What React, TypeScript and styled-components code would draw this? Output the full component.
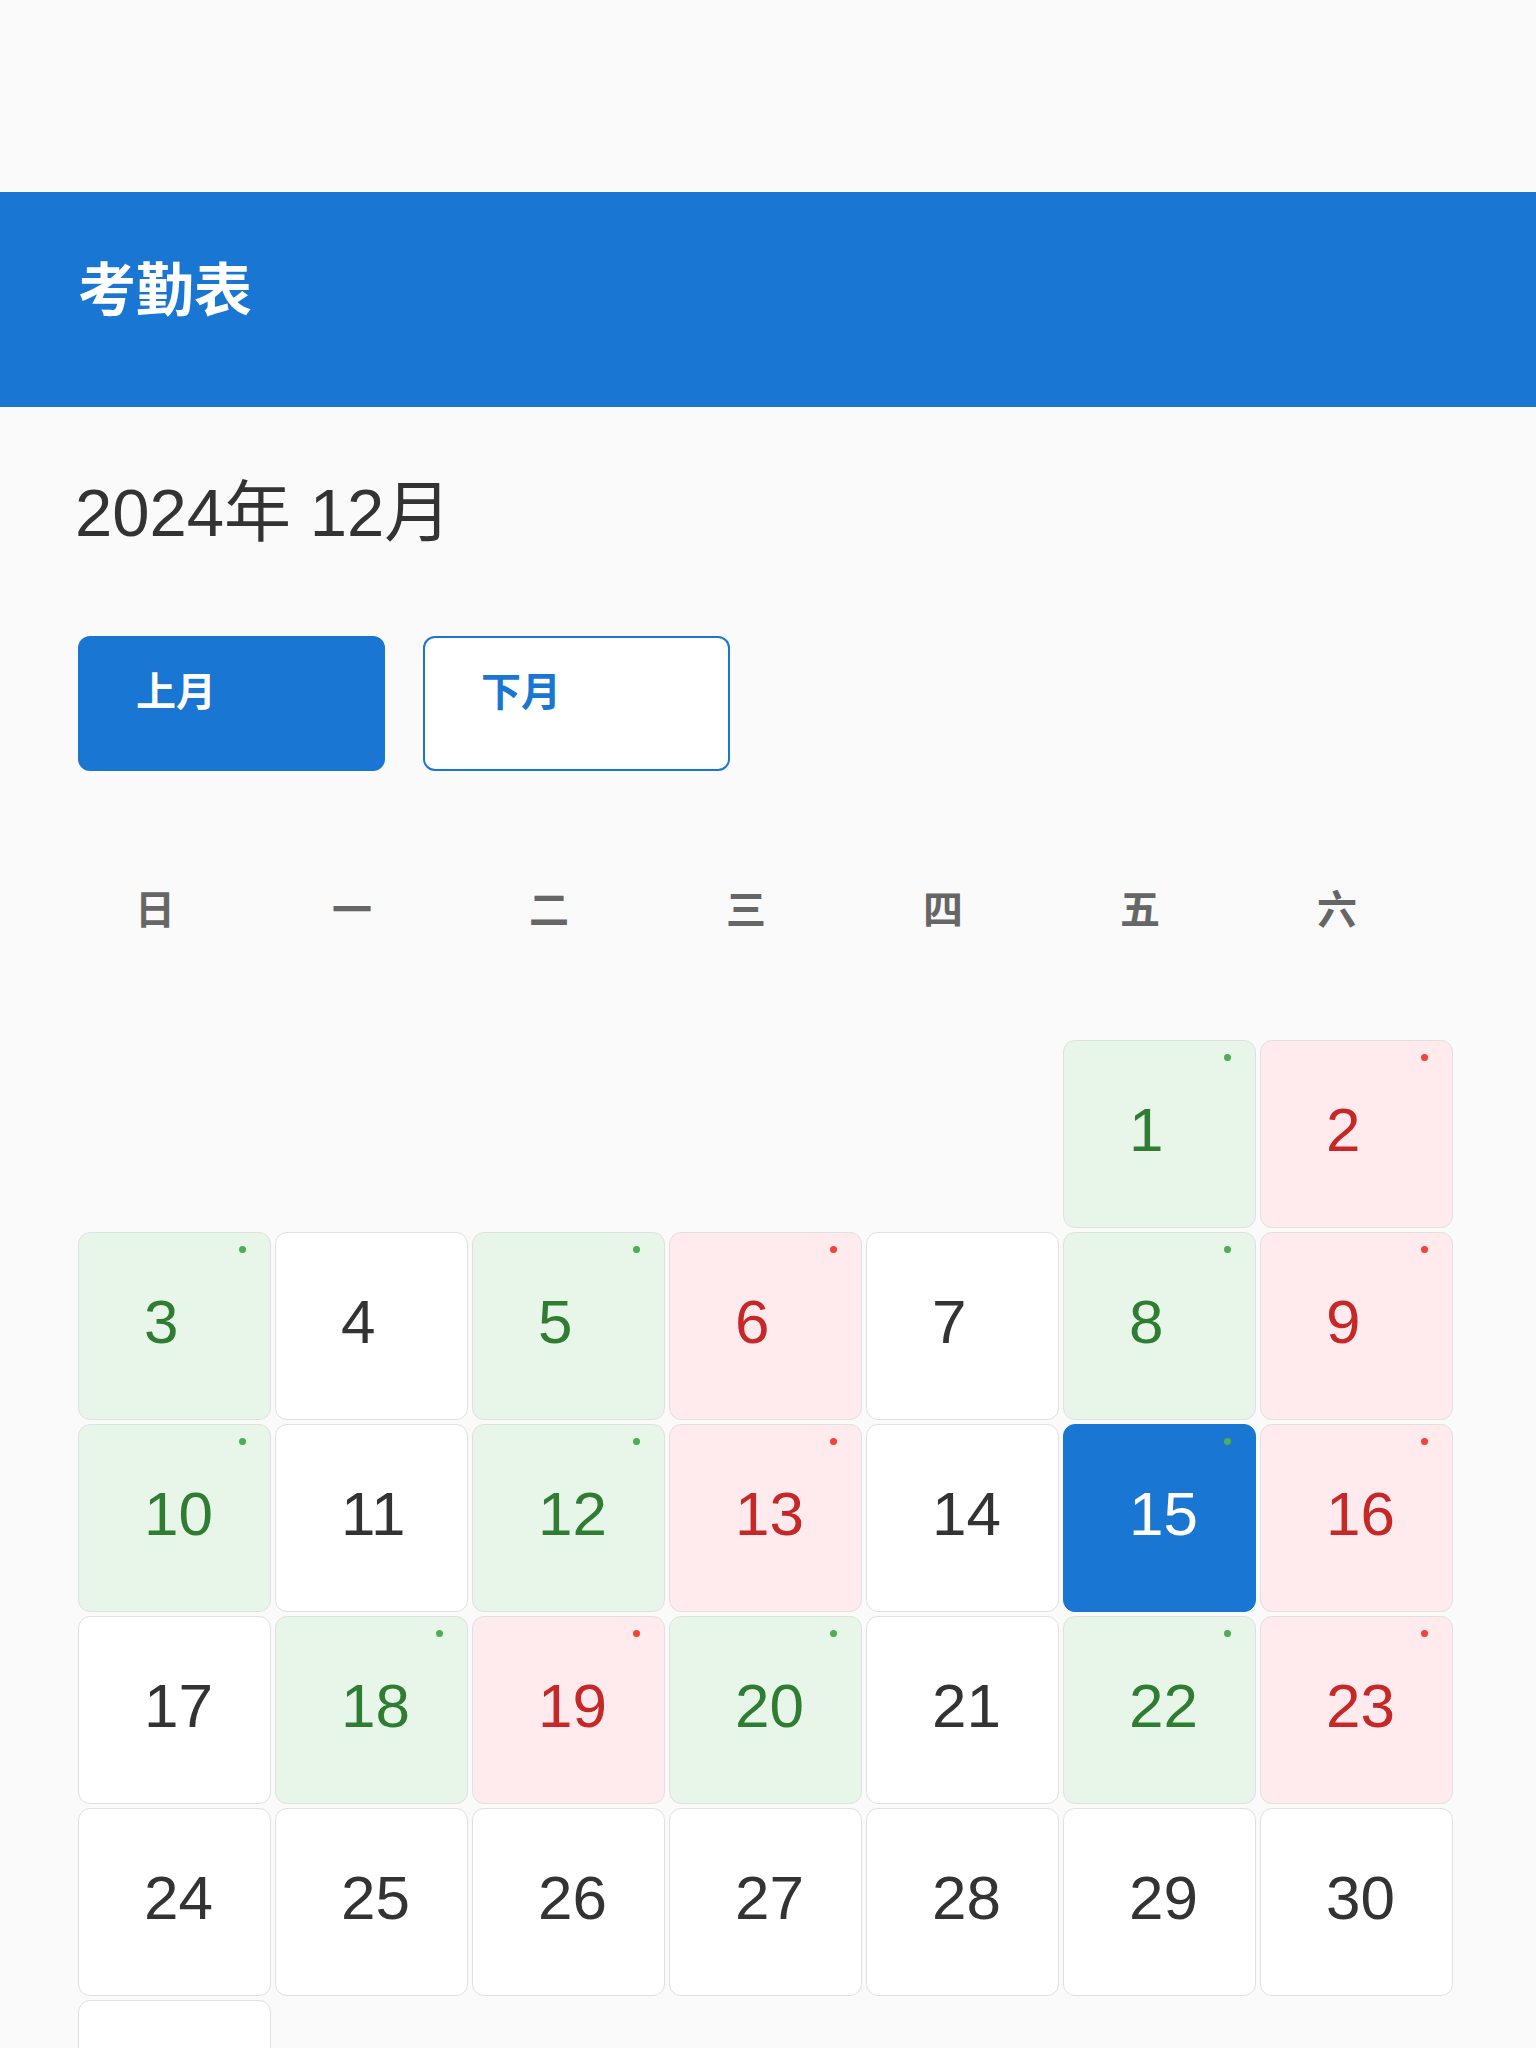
import styled, { createGlobalStyle, css } from "styled-components";

/* ── Data ─────────────────────────────────────────────── */

type Status = "ok" | "off" | "none";

const WEEKDAYS = ["日", "一", "二", "三", "四", "五", "六"];
const LEADING_BLANKS = 5;
const DAYS_IN_MONTH = 31;
const SELECTED_DAY = 15;

const OK_DAYS = [1, 3, 5, 8, 10, 12, 15, 18, 20, 22];
const OFF_DAYS = [2, 6, 9, 13, 16, 19, 23];

function statusOf(day: number): Status {
  if (OK_DAYS.includes(day)) return "ok";
  if (OFF_DAYS.includes(day)) return "off";
  return "none";
}

const palette = {
  blue: "#1976d2",
  okBg: "#e8f5e9",
  okText: "#2e7d32",
  okDot: "#4caf50",
  offBg: "#ffebee",
  offText: "#c62828",
  offDot: "#f44336",
  text: "#333333",
  muted: "#666666",
  border: "#e0e0e0",
};

/* ── Styles ─────────────────────────────────────────────── */

const GlobalStyle = createGlobalStyle`
  html, body {
    margin: 0;
    padding: 0;
    background: #fafafa;
  }
  body {
    font-family: "Liberation Sans", "Noto Sans CJK SC", sans-serif;
    color: ${palette.text};
  }
  * {
    box-sizing: border-box;
  }
`;

const Page = styled.div`
  padding-top: 192px;
  min-height: 2048px;
`;

const Header = styled.header`
  height: 215px;
  background: ${palette.blue};
  padding: 70px 0 0 78px;
`;

const Title = styled.h1`
  margin: 0;
  font-size: 58px;
  line-height: 1;
  font-weight: 700;
  color: #fff;
`;

const Content = styled.main`
  width: 1375px;
  margin-left: 78px;
`;

const MonthLabel = styled.h2`
  margin: 66px 0 0 -3px;
  font-size: 67px;
  line-height: 80px;
  font-weight: 400;
  color: ${palette.text};
`;

const ButtonRow = styled.div`
  display: flex;
  gap: 38px;
  margin-top: 83px;
`;

const NavButton = styled.button<{ $primary?: boolean }>`
  width: 307px;
  height: 135px;
  padding: 34px 0 0 56px;
  display: flex;
  align-items: flex-start;
  border: 2px solid ${palette.blue};
  border-radius: 12px;
  font-family: inherit;
  font-size: 40px;
  line-height: 1;
  font-weight: 700;
  cursor: pointer;
  ${({ $primary }) =>
    $primary
      ? css`
          background: ${palette.blue};
          color: #fff;
        `
      : css`
          background: #fff;
          color: ${palette.blue};
        `}
`;

const WeekRow = styled.div`
  display: grid;
  grid-template-columns: repeat(7, 1fr);
  gap: 4px;
  margin-top: 119px;
`;

const WeekLabel = styled.div`
  padding-left: 57px;
  font-size: 40px;
  line-height: 1;
  font-weight: 700;
  color: ${palette.muted};
`;

const Grid = styled.div`
  display: grid;
  grid-template-columns: repeat(7, 1fr);
  grid-auto-rows: 188px;
  gap: 4px;
  margin-top: 110px;
`;

const Blank = styled.div``;

const dayColors = {
  ok: css`
    background: ${palette.okBg};
    color: ${palette.okText};
  `,
  off: css`
    background: ${palette.offBg};
    color: ${palette.offText};
  `,
  none: css`
    background: #fff;
    color: ${palette.text};
  `,
};

const DayCell = styled.div<{ $status: Status; $selected?: boolean }>`
  position: relative;
  display: flex;
  align-items: center;
  padding: 0 0 8px 65px;
  border: 1px solid ${palette.border};
  border-radius: 12px;
  font-size: 62px;
  line-height: 1;
  ${({ $status }) => dayColors[$status]}
  ${({ $selected }) =>
    $selected &&
    css`
      background: ${palette.blue};
      border-color: ${palette.blue};
      color: #fff;
    `}
`;

const Dot = styled.span<{ $status: Status }>`
  position: absolute;
  top: 13px;
  right: 24px;
  width: 7px;
  height: 7px;
  border-radius: 50%;
  background: ${({ $status }) =>
    $status === "ok" ? palette.okDot : palette.offDot};
`;

/* ── Component ───────────────────────────────────────────── */

export default function App() {
  const days = Array.from({ length: DAYS_IN_MONTH }, (_, i) => i + 1);

  return (
    <Page>
      <GlobalStyle />
      <Header>
        <Title>考勤表</Title>
      </Header>

      <Content>
        <MonthLabel>2024年 12月</MonthLabel>

        <ButtonRow>
          <NavButton $primary>上月</NavButton>
          <NavButton>下月</NavButton>
        </ButtonRow>

        <WeekRow>
          {WEEKDAYS.map((w) => (
            <WeekLabel key={w}>{w}</WeekLabel>
          ))}
        </WeekRow>

        <Grid>
          {Array.from({ length: LEADING_BLANKS }, (_, i) => (
            <Blank key={`b${i}`} />
          ))}
          {days.map((day) => {
            const status = statusOf(day);
            return (
              <DayCell
                key={day}
                $status={status}
                $selected={day === SELECTED_DAY}
              >
                {day}
                {status !== "none" && <Dot $status={status} />}
              </DayCell>
            );
          })}
        </Grid>
      </Content>
    </Page>
  );
}
